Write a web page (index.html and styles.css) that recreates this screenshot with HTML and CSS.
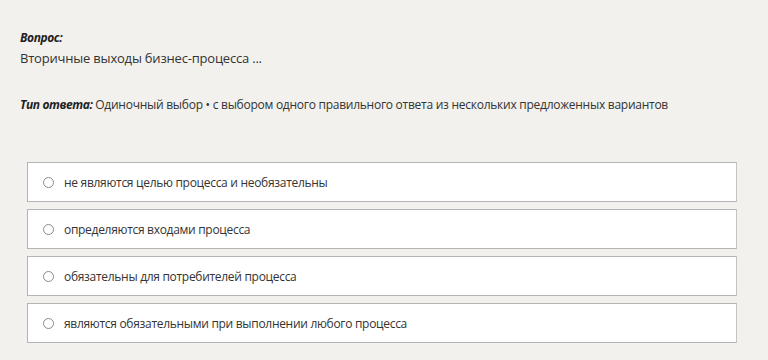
FILE: index.html
```html
<html>
<head>
    <title>Вопрос</title>
    <link rel="stylesheet" href="styles.css">
</head>
<body>
    <div class="page">
        <div class="question">
            <div class="label">Вопрос:</div>
            <div class="text">Вторичные выходы бизнес-процесса ...</div>
        </div>
        <div class="type"><span class="label">Тип ответа:</span> Одиночный выбор • с выбором одного правильного ответа из нескольких предложенных вариантов</div>
        <div class="answers">
            <label class="answer"><span class="radio"></span>не являются целью процесса и необязательны</label>
            <label class="answer"><span class="radio"></span>определяются входами процесса</label>
            <label class="answer"><span class="radio"></span>обязательны для потребителей процесса</label>
            <label class="answer"><span class="radio"></span>являются обязательными при выполнении любого процесса</label>
        </div>
    </div>
</body>
</html>
```

FILE: styles.css
```css
body { margin: 0; background: #f2f1ee; font-family: "Open Sans", "Noto Sans", sans-serif; color: #333; }
.page { padding: 29px 31px 0 20px; }
.label { font-weight: bold; font-style: italic; font-size: 12px; color: #222; letter-spacing: -0.4px; }
.question .text { font-size: 13px; margin-top: 3px; letter-spacing: -0.2px; }
.type { font-size: 12px; margin-top: 29px; letter-spacing: -0.26px; }
.answers { margin-top: 49px; margin-left: 7px; display: flex; flex-direction: column; gap: 7px; }
.answer { display: flex; align-items: center; height: 38px; background: #fff; border: 1px solid #b4b4b4; border-right-color: #c4c4c4; font-size: 12px; letter-spacing: -0.3px; padding-left: 15px; }
.radio { width: 9px; height: 9px; border: 1px solid #8a8a8a; border-radius: 50%; margin-right: 10px; }
```
